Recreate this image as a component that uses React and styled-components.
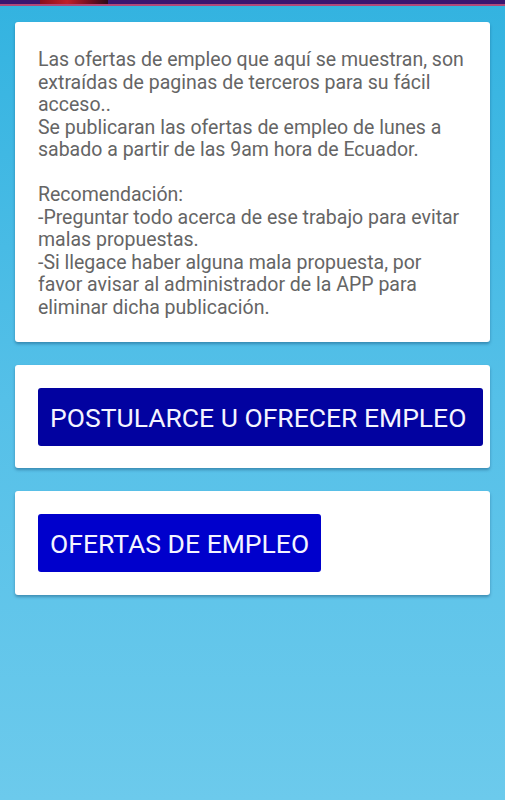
import React from "react";
import styled, { createGlobalStyle } from "styled-components";

const GlobalStyle = createGlobalStyle`
  html, body {
    margin: 0;
    padding: 0;
  }
  body {
    font-family: Roboto, "Noto Sans", sans-serif;
    background: #6ccaec;
  }
`;

const Screen = styled.div`
  width: 505px;
  height: 800px;
  overflow: hidden;
  background: linear-gradient(to bottom, #33b3e0 0%, #55c0e8 50%, #6ccaec 100%);
`;

const TopBar = styled.div`
  height: 4px;
  background: #3a1670;
  border-bottom: 2px solid #b04a7a;
  display: flex;
  padding-left: 40px;
`;

const TopImage = styled.div`
  width: 68px;
  height: 4px;
  background: linear-gradient(to right, #8a0f1a, #c0202a 40%, #7a1020 70%, #2a0a18);
`;

const Content = styled.div`
  display: flex;
  flex-direction: column;
  gap: 23px;
  padding: 16px 15px 0 15px;
`;

const Card = styled.div`
  background: #fff;
  border-radius: 3px;
  box-shadow: 0 2px 3px rgba(0, 40, 80, 0.35);
  padding: ${p => p.$pad || "23px"};
`;

const Notice = styled.p`
  margin: 0;
  font-size: 19.5px;
  line-height: 22.5px;
  color: #656565;
  white-space: nowrap;
`;

const ActionButton = styled.button`
  display: inline-block;
  border: none;
  border-radius: 3px;
  background: ${p => p.$bg};
  color: #f4f4ff;
  font-family: Roboto, sans-serif;
  font-size: 26.5px;
  height: 58px;
  padding: 0 12px;
  width: ${p => (p.$full ? "100%" : "auto")};
  text-align: left;
  white-space: nowrap;
  cursor: pointer;
`;

export default function App() {
  return (
    <Screen>
      <GlobalStyle />
      <TopBar>
        <TopImage />
      </TopBar>
      <Content>
        <Card $pad="27px 23px 23px">
          <Notice>
            Las ofertas de empleo que aquí se muestran, son
            <br />
            extraídas de paginas de terceros para su fácil
            <br />
            acceso..
            <br />
            Se publicaran las ofertas de empleo de lunes a
            <br />
            sabado a partir de las 9am hora de Ecuador.
            <br />
            <br />
            Recomendación:
            <br />
            -Preguntar todo acerca de ese trabajo para evitar
            <br />
            malas propuestas.
            <br />
            -Si llegace haber alguna mala propuesta, por
            <br />
            favor avisar al administrador de la APP para
            <br />
            eliminar dicha publicación.
          </Notice>
        </Card>
        <Card $pad="23px 7px 22px 23px">
          <ActionButton $bg="#0202a0" $full>
            POSTULARCE U OFRECER EMPLEO
          </ActionButton>
        </Card>
        <Card>
          <ActionButton $bg="#0000cc">OFERTAS DE EMPLEO</ActionButton>
        </Card>
      </Content>
    </Screen>
  );
}
